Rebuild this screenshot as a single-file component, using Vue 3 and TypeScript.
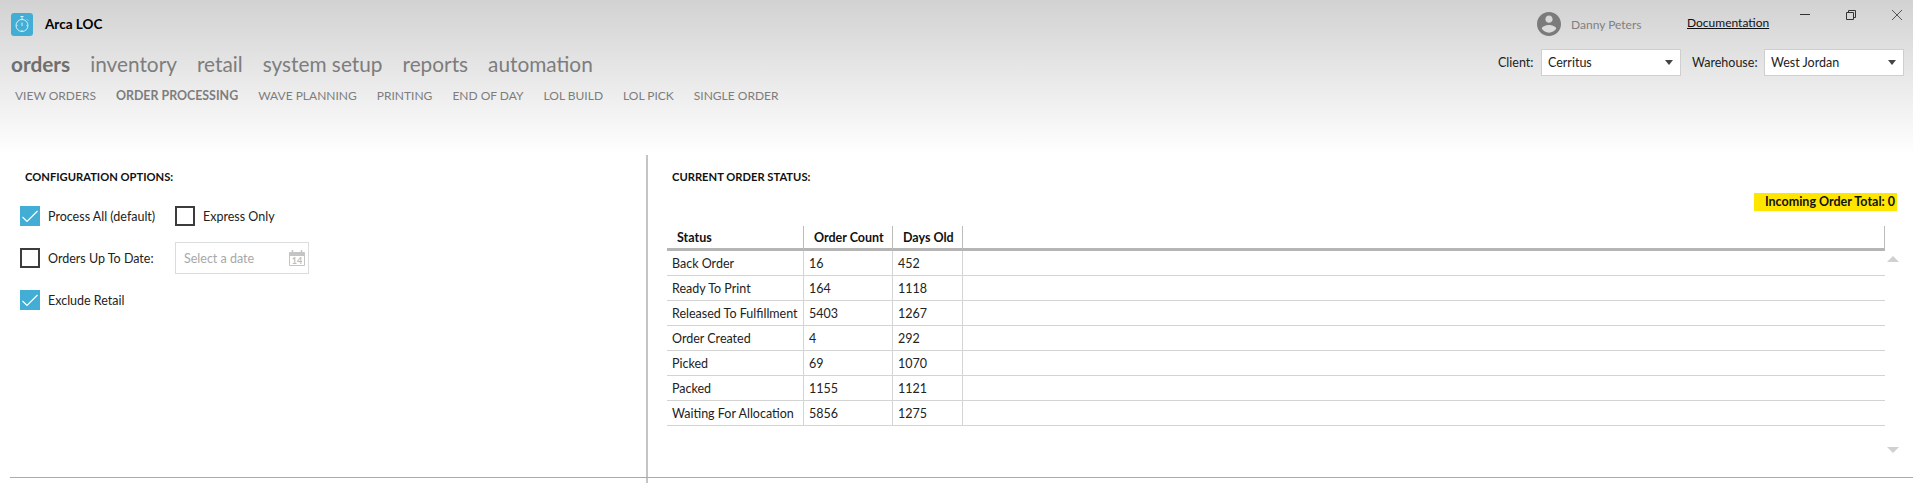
<script setup lang="ts">
const mainNav = ['orders', 'inventory', 'retail', 'system setup', 'reports', 'automation']
const subNav = ['VIEW ORDERS', 'ORDER PROCESSING', 'WAVE PLANNING', 'PRINTING', 'END OF DAY', 'LOL BUILD', 'LOL PICK', 'SINGLE ORDER']

const rows = [
  { status: 'Back Order', count: 16, days: 452 },
  { status: 'Ready To Print', count: 164, days: 1118 },
  { status: 'Released To Fulfillment', count: 5403, days: 1267 },
  { status: 'Order Created', count: 4, days: 292 },
  { status: 'Picked', count: 69, days: 1070 },
  { status: 'Packed', count: 1155, days: 1121 },
  { status: 'Waiting For Allocation', count: 5856, days: 1275 },
]
</script>

<template>
  <div class="page">
    <header class="header">
      <div class="header-left">
        <div class="brand">
          <span class="logo">
            <svg width="16" height="18" viewBox="0 0 16 18" fill="none" stroke="#d8f0f9" stroke-width="1">
              <circle cx="8" cy="10.500" r="6" />
              <path d="M6.500 1.500h3M8 1.500v3M8 7.500v3.500M13 4.500l1 1" />
              <path d="M8 15v1M2.500 10.500h1M12.500 10.500h1" />
            </svg>
          </span>
          <span class="brand-name">Arca LOC</span>
        </div>
        <nav class="main-nav">
          <span v-for="(item, i) in mainNav" :key="item" :class="{ active: i === 0 }">{{ item }}</span>
        </nav>
        <nav class="sub-nav">
          <span v-for="(item, i) in subNav" :key="item" :class="{ active: i === 1 }">{{ item }}</span>
        </nav>
      </div>
      <div class="header-right">
        <div class="top-line">
          <svg class="avatar" width="24" height="24" viewBox="2 2 20 20" fill="#7b7b7b">
            <path d="M12 2C6.480 2 2 6.480 2 12s4.480 10 10 10 10-4.480 10-10S17.520 2 12 2zm0 3c1.660 0 3 1.340 3 3s-1.340 3-3 3-3-1.340-3-3 1.340-3 3-3zm0 14.200c-2.500 0-4.710-1.280-6-3.220.03-1.990 4-3.080 6-3.080 1.990 0 5.970 1.090 6 3.080-1.290 1.940-3.500 3.220-6 3.220z" />
          </svg>
          <span class="user">Danny Peters</span>
          <a class="doc">Documentation</a>
          <div class="win">
            <svg width="10" height="10" viewBox="0 0 10 10" fill="none" stroke="#333"><path d="M0 4.500h10" /></svg>
            <svg width="10" height="10" viewBox="0 0 10 10" fill="none" stroke="#333"><path d="M.5 2.500h7v7h-7zM2.500 2.500v-2h7v7h-2" /></svg>
            <svg width="10" height="10" viewBox="0 0 10 10" fill="none" stroke="#333" stroke-width=".8"><path d="M0 0l10 10M10 0L0 10" /></svg>
          </div>
        </div>
        <div class="selects">
          <label class="lbl-client">Client:</label>
          <div class="select">Cerritus<i class="caret"></i></div>
          <label class="lbl-wh">Warehouse:</label>
          <div class="select">West Jordan<i class="caret"></i></div>
        </div>
      </div>
    </header>

    <main class="content">
      <section class="config">
        <h2>CONFIGURATION OPTIONS:</h2>
        <div class="opt-row">
          <span class="check checked">
            <svg width="20" height="20" viewBox="0 0 20 20" fill="none" stroke="#fff" stroke-width="1.200"><path d="M2.500 11l4.500 4.500L17.500 5" /></svg>
          </span>
          <span class="opt-label first">Process All (default)</span>
          <span class="check"></span>
          <span class="opt-label">Express Only</span>
        </div>
        <div class="opt-row">
          <span class="check"></span>
          <span class="opt-label first">Orders Up To Date:</span>
          <div class="date">
            <span>Select a date</span>
            <svg width="16" height="16" viewBox="0 0 16 16" fill="none" stroke="#c4c4c4">
              <path d="M.5 2.500h15v13H.5z" />
              <path d="M1 3h14v2.500H1z" fill="#c4c4c4" />
              <path d="M3.500 0v3M12.500 0v3" stroke-width="1.500" />
              <text x="8" y="14" text-anchor="middle" class="cal-num">14</text>
            </svg>
          </div>
        </div>
        <div class="opt-row">
          <span class="check checked">
            <svg width="20" height="20" viewBox="0 0 20 20" fill="none" stroke="#fff" stroke-width="1.200"><path d="M2.500 11l4.500 4.500L17.500 5" /></svg>
          </span>
          <span class="opt-label first">Exclude Retail</span>
        </div>
      </section>

      <section class="status">
        <h2>CURRENT ORDER STATUS:</h2>
        <div class="total-line"><span class="total">Incoming Order Total: 0</span></div>
        <div class="table-wrap">
          <table>
            <thead>
              <tr>
                <th class="c1">Status</th>
                <th class="c2">Order Count</th>
                <th class="c3">Days Old</th>
                <th></th>
              </tr>
            </thead>
            <tbody>
              <tr v-for="row in rows" :key="row.status">
                <td>{{ row.status }}</td>
                <td>{{ row.count }}</td>
                <td>{{ row.days }}</td>
                <td></td>
              </tr>
            </tbody>
          </table>
          <div class="scroll">
            <i class="up"></i>
            <i class="down"></i>
          </div>
        </div>
      </section>
    </main>
    <div class="footer"><span></span></div>
  </div>
</template>

<style>
html, body { margin: 0; background: #fff; }
</style>

<style scoped>
.page {
  width: 1913px;
  height: 483px;
  overflow: hidden;
  font-family: Lato, "Noto Sans", sans-serif;
  font-size: 12.5px;
  color: #222;
  display: flex;
  flex-direction: column;
}

.header {
  height: 155px;
  flex: none;
  display: flex;
  justify-content: space-between;
  background: linear-gradient(#d2d2d2, #ffffff);
}

.header-left { padding: 12px 0 0 11px; }

.brand { display: flex; align-items: center; gap: 12px; height: 24px; }
.logo {
  width: 22px;
  height: 23px;
  background: #42aed6;
  border-radius: 3px;
  display: flex;
  align-items: center;
  justify-content: center;
}
.brand-name { font-size: 13.5px; font-weight: 700; color: #000; }

.main-nav {
  display: flex;
  gap: 20px;
  margin-top: 14px;
  font-size: 20.8px;
  line-height: 28px;
  color: #7d7d7d;
}
.main-nav .active { font-weight: 700; color: #6f6f6f; }

.sub-nav {
  display: flex;
  gap: 20px;
  margin-top: 9px;
  padding-left: 4px;
  font-size: 12px;
  line-height: 18px;
  color: #7d7d7d;
}
.sub-nav .active { font-weight: 700; font-size: 12.4px; }

.header-right { width: 415px; padding-top: 12px; }

.top-line { display: flex; align-items: center; height: 24px; padding-left: 39px; position: relative; }
.user { margin-left: 10px; width: 116px; color: #808080; font-size: 12px; }
.doc { color: #111; text-decoration: underline; margin-top: -4px; font-size: 12px; }
.win {
  position: absolute;
  right: 11px;
  top: -2px;
  display: flex;
  gap: 36px;
}

.selects {
  display: flex;
  align-items: center;
  margin-top: 13px;
}
.lbl-client { width: 43px; }
.lbl-wh { width: 72px; margin-left: 11px; }
.select {
  width: 140px;
  height: 27px;
  box-sizing: border-box;
  border: 1px solid #cfcfcf;
  background: #fff;
  padding-left: 6px;
  line-height: 25px;
  position: relative;
}
.caret {
  position: absolute;
  right: 7px;
  top: 10px;
  border-left: 4px solid transparent;
  border-right: 4px solid transparent;
  border-top: 5px solid #444;
}

.content { height: 322px; flex: none; display: flex; border-bottom: 1px solid #aaa; margin-left: 10px; }

h2 {
  margin: 0;
  font-size: 11.2px;
  font-weight: 700;
  color: #111;
  line-height: 18px;
}

.config { width: 636px; flex: none; padding: 13px 0 0 15px; box-sizing: border-box; }

.opt-row { display: flex; align-items: center; height: 32px; margin-left: -5px; margin-top: 10px; }
.opt-row:first-of-type { margin-top: 14px; }

.check {
  width: 20px;
  height: 20px;
  box-sizing: border-box;
  border: 2px solid #3c3c3c;
  flex: none;
}
.check.checked { background: #42aed6; border: none; }
.check svg { display: block; }

.opt-label { margin-left: 8px; color: #222; }
.opt-label.first { width: 127px; }

.date {
  width: 134px;
  height: 32px;
  box-sizing: border-box;
  border: 1px solid #dcdcdc;
  padding: 0 3px 0 8px;
  display: flex;
  align-items: center;
  justify-content: space-between;
  color: #a8a8a8;
}
.cal-num { font-size: 9px; fill: #bdbdbd; stroke: none; font-weight: 700; }

.status {
  flex: 1;
  border-left: 2px solid #c4c4c4;
  padding: 13px 0 0 19px;
  min-width: 0;
}
.status h2 { margin-left: 5px; }

.total-line { display: flex; justify-content: flex-end; margin: 7px 16px 0 0; }
.total { background: #ffe600; padding: 0 2px 0 11px; font-weight: 700; color: #111; line-height: 18px; }

.table-wrap { display: flex; margin-top: 15px; }

table {
  flex: 1;
  align-self: flex-start;
  border-collapse: separate;
  border-spacing: 0;
  table-layout: fixed;
}
th, td { box-sizing: border-box; text-align: left; padding: 0; }
th {
  height: 25px;
  font-weight: 700;
  color: #111;
  border-right: 1px solid #bcbcbc;
  border-bottom: 3px solid #b5b5b5;
  padding-left: 10px;
}
td {
  height: 25px;
  color: #222;
  padding-left: 5px;
  border-right: 1px solid #d4d4d4;
  border-bottom: 1px solid #d4d4d4;
}
td:last-child { border-right: none; }
.c1 { width: 137px; }
.c2 { width: 89px; }
.c3 { width: 70px; }

.scroll {
  width: 16px;
  margin-right: 12px;
  flex: none;
  display: flex;
  flex-direction: column;
  justify-content: space-between;
  align-items: center;
  padding-top: 30px;
  height: 227px;
  box-sizing: border-box;
}
.up, .down {
  border-left: 6px solid transparent;
  border-right: 6px solid transparent;
}
.up { border-bottom: 6px solid #d0d0d0; }
.down { border-top: 6px solid #d0d0d0; }

.footer { flex: 1; padding-left: 646px; }
.footer span { display: block; width: 2px; height: 100%; background: #c4c4c4; }
</style>
